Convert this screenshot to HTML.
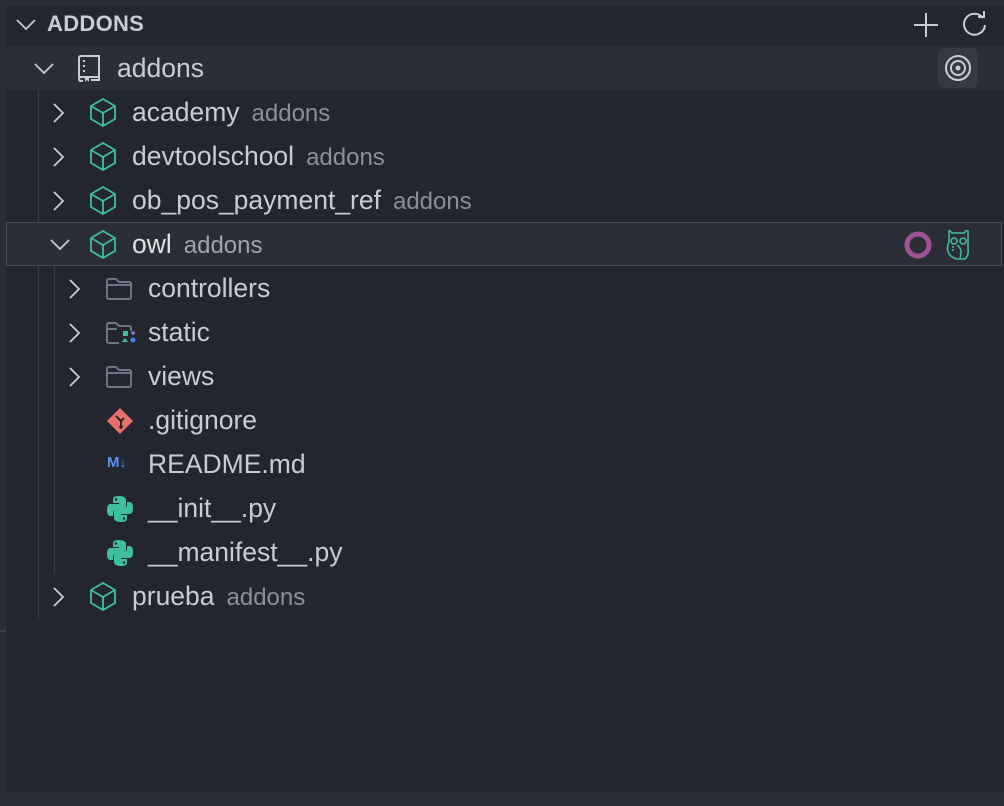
<!DOCTYPE html>
<html><head><meta charset="utf-8"><style>
body{margin:0;width:1004px;height:806px;background:#23262e;font-family:"Liberation Sans",Arial,sans-serif;overflow:hidden;position:relative;color:#c9ccd3}
.abs{position:absolute}
.row{position:absolute;left:6px;right:0;height:44px}
.t{position:absolute;top:9px;font-size:26.5px;line-height:28px;color:#c9ccd3;white-space:nowrap}
.d{color:#8b8f98;font-size:24px;margin-left:12px}
svg{position:absolute}
</style></head><body>
<div class="abs" style="left:0;top:0;width:1004px;height:6px;background:#2a2d35"></div>
<div class="abs" style="left:0;top:0;width:6px;height:806px;background:#2a2d35"></div>
<div class="abs" style="left:0;top:792px;width:1004px;height:14px;background:#2a2d35"></div>
<div class="abs" style="left:0;top:630px;width:6px;height:2px;background:#3a3d45"></div>

<!-- header -->
<svg style="left:14px;top:14px" width="24" height="20" viewBox="0 0 24 20"><path d="M3 6l9 9 9-9" fill="none" stroke="#c9ccd3" stroke-width="1.8"/></svg>
<div class="abs" style="left:47px;top:11px;font-size:22px;font-weight:bold;color:#c9ccd3;letter-spacing:0.3px">ADDONS</div>
<svg style="left:912px;top:11px" width="28" height="28" viewBox="0 0 28 28"><path d="M14 2v24M2 14h24" stroke="#c9ccd3" stroke-width="2"/></svg>
<svg style="left:960px;top:10px" width="30" height="30" viewBox="0 0 30 30"><path d="M23 8A10.5 10.5 0 1 0 25 15" fill="none" stroke="#c9ccd3" stroke-width="2"/><path d="M18 7h6V1" fill="none" stroke="#c9ccd3" stroke-width="2"/></svg>

<!-- addons root row -->
<div class="row" style="top:46px;background:#2b2e36"></div>
<svg style="left:32px;top:58px" width="24" height="20" viewBox="0 0 24 20"><path d="M3 6l9 9 9-9" fill="none" stroke="#c9ccd3" stroke-width="1.8"/></svg>
<svg style="left:75px;top:53px" width="28" height="30" viewBox="0 0 28 30"><path d="M4 24V5q0-2 2-2h18v21H6q-2 0-2 2t2 2h2M24 24v3h-8" fill="none" stroke="#c9ccd3" stroke-width="2"/><path d="M10 24v5l2-2 2 2v-5" fill="#c9ccd3"/><path d="M9 7v2M9 12v2M9 17v2" stroke="#c9ccd3" stroke-width="2"/></svg>
<div class="t" style="left:117px;top:54px">addons</div>
<div class="abs" style="left:938px;top:48px;width:40px;height:40px;background:#363940;border-radius:6px"></div>
<svg style="left:944px;top:54px" width="28" height="28" viewBox="0 0 28 28"><circle cx="14" cy="14" r="12" fill="none" stroke="#c9ccd3" stroke-width="2"/><circle cx="14" cy="14" r="7" fill="none" stroke="#c9ccd3" stroke-width="2"/><circle cx="14" cy="14" r="2.5" fill="#c9ccd3"/></svg>

<!-- guides -->
<div class="abs" style="left:38px;top:90px;width:1px;height:528px;background:#3a3d45"></div>
<div class="abs" style="left:54px;top:266px;width:1px;height:308px;background:#3a3d45"></div>

<!-- owl row highlight -->
<div class="abs" style="left:6px;top:222px;width:994px;height:42px;border:1px solid #464a52;background:#2b2e36"></div>

<svg width="0" height="0"><defs>
<g id="cube"><path d="M14 2L26 9v13l-12 7L2 22V9z M2 9l12 7 12-7 M14 16v13" fill="none" stroke="#3fbfa0" stroke-width="1.8" stroke-linejoin="round"/></g>
<g id="cr"><path d="M6 3l9 9-9 9" fill="none" stroke="#c9ccd3" stroke-width="1.8"/></g>
<g id="cd"><path d="M3 6l9 9 9-9" fill="none" stroke="#c9ccd3" stroke-width="1.8"/></g>
<g id="fold"><path d="M2 5q0-2 2-2h7l3 3h10q2 0 2 2v13q0 2-2 2H4q-2 0-2-2z M2 9h24" fill="none" stroke="#6c7686" stroke-width="2"/></g>
<g id="py"><path d="M13 1c-6 0-6 2-6 4v3h6v1H5c-3 0-4 2-4 6s1 6 4 6h2v-3c0-2 2-4 4-4h6c2 0 3-1 3-3V5c0-2-2-4-7-4z" fill="#3fbfa0"/><path d="M15 27c6 0 6-2 6-4v-3h-6v-1h8c3 0 4-2 4-6s-1-6-4-6h-2v3c0 2-2 4-4 4h-6c-2 0-3 1-3 3v6c0 2 2 4 7 4z" fill="#3fbfa0"/><circle cx="10" cy="4.5" r="1.2" fill="#23262e"/><circle cx="18" cy="23.5" r="1.2" fill="#23262e"/></g>
</defs></svg>

<!-- level 1 packages -->
<svg style="left:48px;top:101px" width="24" height="24"><use href="#cr"/></svg>
<svg style="left:89px;top:97px" width="30" height="32"><use href="#cube"/></svg>
<div class="t" style="left:132px;top:98px">academy<span class="d">addons</span></div>

<svg style="left:48px;top:145px" width="24" height="24"><use href="#cr"/></svg>
<svg style="left:89px;top:141px" width="30" height="32"><use href="#cube"/></svg>
<div class="t" style="left:132px;top:142px">devtoolschool<span class="d">addons</span></div>

<svg style="left:48px;top:189px" width="24" height="24"><use href="#cr"/></svg>
<svg style="left:89px;top:185px" width="30" height="32"><use href="#cube"/></svg>
<div class="t" style="left:132px;top:186px">ob_pos_payment_ref<span class="d">addons</span></div>

<svg style="left:48px;top:234px" width="24" height="24"><use href="#cd"/></svg>
<svg style="left:89px;top:229px" width="30" height="32"><use href="#cube"/></svg>
<div class="t" style="left:132px;top:230px;color:#e0e2e6">owl<span class="d" style="color:#a0a4ac">addons</span></div>
<svg style="left:903px;top:230px" width="30" height="30"><circle cx="15" cy="15" r="11" fill="none" stroke="#a05294" stroke-width="5"/></svg>
<svg style="left:945px;top:227px" width="28" height="34" viewBox="0 0 28 34"><path d="M4 3l3 3h12l3-3M4 3v12q-3 6 0 12 4 5 10 5h6q4-4 3-10V3M9 11a3 3 0 1 0 .1 0M18 11a3 3 0 1 0 .1 0M12 18q6 4 3 13" fill="none" stroke="#3fbfa0" stroke-width="1.5"/><path d="M7 20h2M7 23h2" stroke="#3fbfa0" stroke-width="1.5"/></svg>

<!-- level 2 -->
<svg style="left:64px;top:277px" width="24" height="24"><use href="#cr"/></svg>
<svg style="left:105px;top:276px" width="30" height="26"><use href="#fold"/></svg>
<div class="t" style="left:148px;top:274px">controllers</div>

<svg style="left:64px;top:321px" width="24" height="24"><use href="#cr"/></svg>
<svg style="left:105px;top:320px" width="32" height="26" viewBox="0 0 32 26"><path d="M2 5q0-2 2-2h7l3 3h10q2 0 2 2v3M2 9h10M2 5v16q0 2 2 2h10" fill="none" stroke="#6c7686" stroke-width="2"/><rect x="18" y="11" width="5" height="5" fill="#3fbfa0"/><circle cx="28" cy="20" r="2.5" fill="#4a7ef0"/><circle cx="28" cy="13" r="1.8" fill="#a070e0"/><path d="M17 22l3-4 3 4z" fill="#3fbfa0"/></svg>
<div class="t" style="left:148px;top:318px">static</div>

<svg style="left:64px;top:365px" width="24" height="24"><use href="#cr"/></svg>
<svg style="left:105px;top:364px" width="30" height="26"><use href="#fold"/></svg>
<div class="t" style="left:148px;top:362px">views</div>

<svg style="left:106px;top:407px" width="28" height="28" viewBox="0 0 28 28"><path d="M14 1l13 13-13 13L1 14z" fill="#e8706a"/><path d="M10 9l5 5v6M15 14l3-3" stroke="#23262e" stroke-width="2" fill="none"/><circle cx="15" cy="20" r="1.8" fill="#23262e"/></svg>
<div class="t" style="left:148px;top:406px">.gitignore</div>

<div class="abs" style="left:107px;top:454px;font-size:15px;font-weight:bold;color:#5b8ff0">M<span style="font-size:14px">↓</span></div>
<div class="t" style="left:148px;top:450px">README.md</div>

<svg style="left:106px;top:495px" width="28" height="28"><use href="#py"/></svg>
<div class="t" style="left:148px;top:494px">__init__.py</div>

<svg style="left:106px;top:539px" width="28" height="28"><use href="#py"/></svg>
<div class="t" style="left:148px;top:538px">__manifest__.py</div>

<svg style="left:48px;top:585px" width="24" height="24"><use href="#cr"/></svg>
<svg style="left:89px;top:581px" width="30" height="32"><use href="#cube"/></svg>
<div class="t" style="left:132px;top:582px">prueba<span class="d">addons</span></div>
</body></html>
